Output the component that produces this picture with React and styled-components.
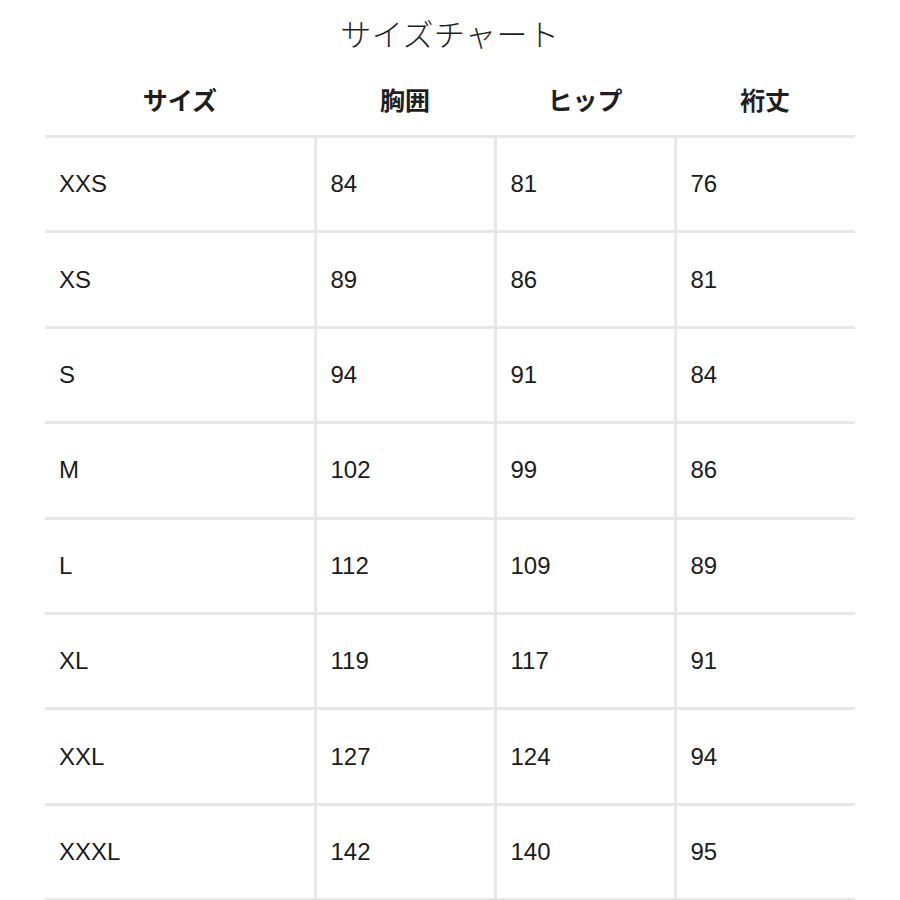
import React from "react";
import styled, { createGlobalStyle } from "styled-components";

const Global = createGlobalStyle`
  html, body { margin: 0; padding: 0; background: #fff; }
  body { font-family: "Liberation Sans", "Noto Sans CJK JP", sans-serif; }
`;

const Page = styled.div`
  width: 900px;
  height: 900px;
  overflow: hidden;
  background: #fff;
`;

const Title = styled.h1`
  margin: 0;
  height: 68px;
  line-height: 66px;
  text-align: center;
  font-family: "Noto Sans CJK JP", sans-serif;
  font-weight: 300;
  font-size: 31px;
  color: #1e1e1e;
  letter-spacing: 0.5px;
`;

const Table = styled.table`
  margin-left: 45px;
  width: 810px;
  border-collapse: collapse;
  table-layout: fixed;
`;

const Col = styled.col`
  width: ${(p) => p.$w}px;
`;

const HeadCell = styled.th`
  height: 61px;
  padding: 0 0 6px 0;
  text-align: center;
  vertical-align: middle;
  font-family: "Noto Sans CJK JP", sans-serif;
  font-weight: 700;
  font-size: 25px;
  color: #1e1e1e;
  border-bottom: 3px solid #e7e7e7;
`;

const Row = styled.tr`
  height: 95.4px;
`;

const Cell = styled.td`
  padding: 0 0 0 14px;
  vertical-align: middle;
  font-family: "Liberation Sans", Arial, sans-serif;
  font-size: 24px;
  color: #1c1c1c;
  border-top: 3px solid #e7e7e7;
  border-bottom: 3px solid #e7e7e7;
  border-left: ${(p) => (p.$first ? "none" : "3px solid #e7e7e7")};
`;

const headers = ["サイズ", "胸囲", "ヒップ", "裄丈"];
const rows = [
  ["XXS", "84", "81", "76"],
  ["XS", "89", "86", "81"],
  ["S", "94", "91", "84"],
  ["M", "102", "99", "86"],
  ["L", "112", "109", "89"],
  ["XL", "119", "117", "91"],
  ["XXL", "127", "124", "94"],
  ["XXXL", "142", "140", "95"],
];

export default function App() {
  return (
    <Page>
      <Global />
      <Title>サイズチャート</Title>
      <Table>
        <colgroup>
          <Col $w={270} />
          <Col $w={180} />
          <Col $w={180} />
          <Col $w={180} />
        </colgroup>
        <thead>
          <tr>
            {headers.map((h) => (
              <HeadCell key={h}>{h}</HeadCell>
            ))}
          </tr>
        </thead>
        <tbody>
          {rows.map((r) => (
            <Row key={r[0]}>
              {r.map((v, i) => (
                <Cell key={i} $first={i === 0}>
                  {v}
                </Cell>
              ))}
            </Row>
          ))}
        </tbody>
      </Table>
    </Page>
  );
}
